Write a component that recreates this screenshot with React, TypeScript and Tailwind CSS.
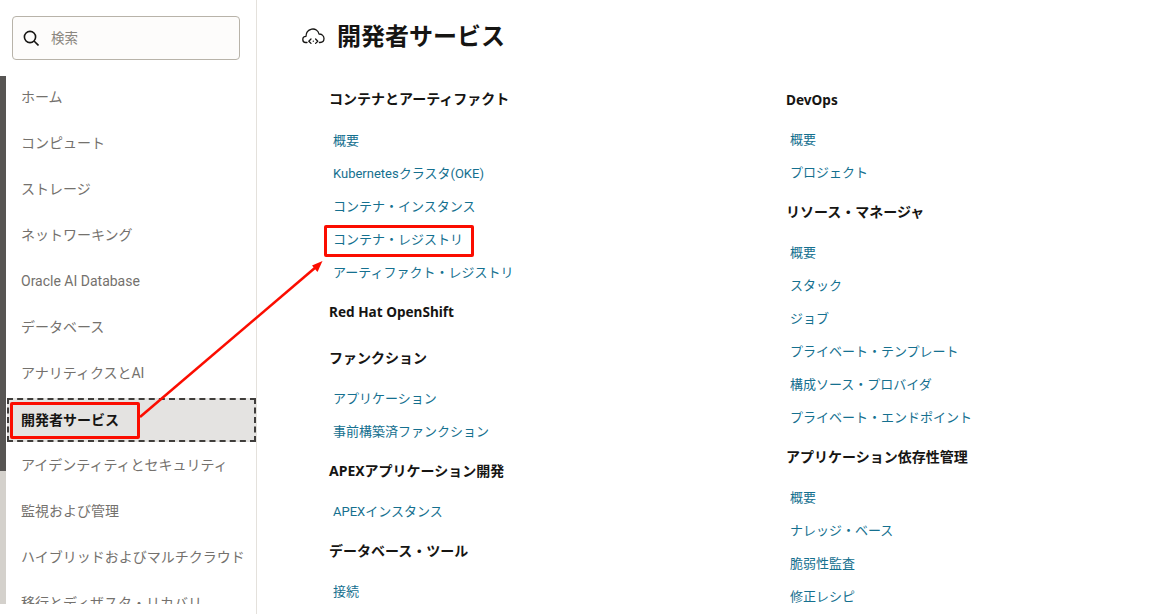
import React from "react";

const navItems = ["ホーム","コンピュート","ストレージ","ネットワーキング","Oracle AI Database","データベース","アナリティクスとAI","開発者サービス","アイデンティティとセキュリティ","監視および管理","ハイブリッドおよびマルチクラウド","移行とディザスタ・リカバリ"];

type Sec = { h: string; links: string[]; latin?: boolean; mb?: string };
const col1: Sec[] = [
  { h: "コンテナとアーティファクト", mb: "mb-[12.5px]", links: ["概要","Kubernetesクラスタ(OKE)","コンテナ・インスタンス","コンテナ・レジストリ","アーティファクト・レジストリ"] },
  { h: "Red Hat OpenShift", latin: true, mb: "mb-[11px]", links: [] },
  { h: "ファンクション", mb: "mb-[12px]", links: ["アプリケーション","事前構築済ファンクション"] },
  { h: "APEXアプリケーション開発", mb: "mb-[12px]", links: ["APEXインスタンス"] },
  { h: "データベース・ツール", mb: "mb-[12.5px]", links: ["接続"] },
];
const col2: Sec[] = [
  { h: "DevOps", latin: true, mb: "mb-[10.5px]", links: ["概要","プロジェクト"] },
  { h: "リソース・マネージャ", mb: "mb-[12.5px]", links: ["概要","スタック","ジョブ","プライベート・テンプレート","構成ソース・プロバイダ","プライベート・エンドポイント"] },
  { h: "アプリケーション依存性管理", mb: "mb-[11.5px]", links: ["概要","ナレッジ・ベース","脆弱性監査","修正レシピ"] },
];

function Column({ secs, className }: { secs: Sec[]; className: string }) {
  return (
    <div className={"flex flex-col gap-[11px] " + className}>
      {secs.map((s) => (
        <section key={s.h}>
          <div className={"h-[24px] leading-[24px] font-bold text-[#161513] whitespace-nowrap " + (s.latin ? "text-[13.6px] " : "text-[14px] ") + s.mb}>{s.h}</div>
          {s.links.map((l, i) => (
            <div key={l + i} className="h-[33px] leading-[33px] pl-[4px] text-[13px] text-[#15708f] whitespace-nowrap" style={{ fontFamily: 'Roboto, "Noto Sans CJK JP", sans-serif' }}>{l}</div>
          ))}
        </section>
      ))}
    </div>
  );
}

export default function App() {
  return (
    <div className="relative flex w-[1163px] h-[614px] overflow-hidden bg-white" style={{ fontFamily: '"Noto Sans", "Noto Sans CJK JP", sans-serif' }}>
      <aside className="w-[257px] shrink-0 border-r border-[#e4e1dc] flex flex-col">
        <div className="pl-[12px] pr-[16px] pt-[16px]">
          <div className="h-[44px] rounded-[4px] border border-[#b8b3a9] bg-[#fdfcfb] flex items-center pl-[10px] gap-[12px]">
            <svg width="16" height="16" viewBox="0 0 16 16" fill="none" stroke="#161513" strokeWidth="1.6">
              <circle cx="7" cy="7" r="5.6" />
              <path d="M11 11 L15.5 15.5" />
            </svg>
            <span className="text-[13.5px] text-[#8b8780] pt-[1px]">検索</span>
          </div>
        </div>
        <div className="mt-[16px] h-[528px] overflow-hidden flex">
          <div className="w-[6px] shrink-0 flex flex-col bg-[#d4d1cc]">
            <div className="h-[395px] bg-[#575553]" />
          </div>
          <nav className="flex-1 -mt-[2px]">
            {navItems.map((n) =>
              n === "開発者サービス" ? (
                <div key={n} className="h-[46px] pt-[2px] pl-[1px]">
                  <div className="h-[44px] border-2 border-dashed border-[#3f3d3b] bg-[#e4e3e1] flex items-center pl-[12px] pb-[2px] text-[14px] font-bold text-[#161513]">{n}</div>
                </div>
              ) : (
                <div key={n} className="h-[46px] flex items-center pl-[15px] text-[14px] text-[#74716d] whitespace-nowrap" style={{ fontFamily: 'Roboto, "Noto Sans CJK JP", sans-serif' }}>{n}</div>
              )
            )}
          </nav>
        </div>
      </aside>
      <main className="flex-1 pl-[45px] pt-[18px]">
        <div className="flex items-center h-[36px] gap-[12px]">
          <svg width="23" height="20" viewBox="0 0 23 20" fill="none" stroke="#161513" strokeWidth="1.3" strokeLinecap="round" strokeLinejoin="round">
            <path d="M5 16.5 H3.6 C1.8 16.5 0.8 15 0.8 13.4 C0.8 11.6 2.2 10.3 4 10.3 C4 6.6 6.6 4 9.6 3.2 C13 2.4 16.4 4.6 17 8 C19.6 8 22 9.6 22 12.6 C22 15 20.4 16.5 18 16.5 H17.4" />
            <path d="M9 13 L6.8 15.2 L9 17.4 M13.6 13 L15.8 15.2 L13.6 17.4" />
            <path d="M11.3 15.2 h0.1" />
          </svg>
          <h1 className="text-[24px] font-bold leading-[36px] text-[#161513]">開発者サービス</h1>
        </div>
        <div className="flex pl-[27px]">
          <Column secs={col1} className="w-[457px] pt-[33px]" />
          <Column secs={col2} className="flex-1 pt-[34px]" />
        </div>
      </main>

      <div className="absolute left-[10px] top-[402px] w-[130px] h-[37px] border-[3px] border-[#fb0d00] rounded-[2px]" />
      <div className="absolute left-[324px] top-[225px] w-[150px] h-[32px] border-[3px] border-[#fb0d00] rounded-[2px]" />
      <svg className="absolute left-0 top-0 pointer-events-none" width="1163" height="614" fill="none">
        <path d="M140 417 L316 267" stroke="#fb0d00" strokeWidth="2.6" />
        <path d="M322.5 261 L312 265.5 L317.5 272 Z" fill="#fb0d00" />
      </svg>
    </div>
  );
}
